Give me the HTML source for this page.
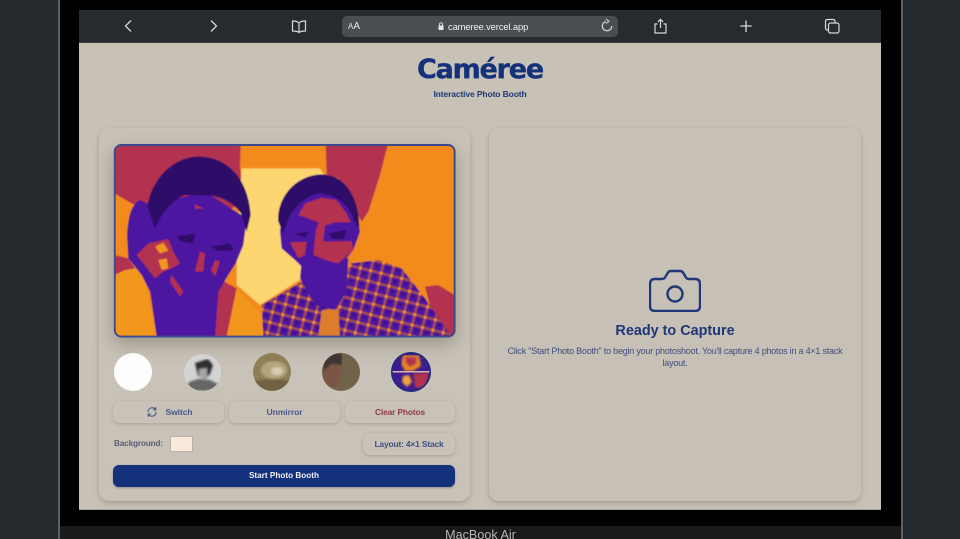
<!DOCTYPE html>
<html lang="en">
<head>
<meta charset="utf-8">
<title>Cameree</title>
<style>
html,body{margin:0;padding:0;width:960px;height:539px;overflow:hidden;background:#24292e;font-family:"Liberation Sans",sans-serif}
#wrap{position:absolute;left:0;top:0;width:960px;height:539px;overflow:hidden;background:#24292e;filter:blur(.35px)}
.abs,.abs *,.btn{box-sizing:border-box}
.abs{position:absolute}
.btn{position:absolute;background:#c9c2b8;border-radius:7px;box-shadow:0 1px 3px rgba(110,100,85,.35);font-size:8.6px;font-weight:bold;text-align:center;line-height:22px;color:#4a5a8c;letter-spacing:-.1px;white-space:nowrap}
.thumb{position:absolute;border-radius:50%;overflow:hidden}
svg{display:block}
.t{position:absolute;white-space:nowrap}
</style>
</head>
<body>
<div id="wrap">
<!-- laptop shell -->
<div class="abs" style="left:58px;top:-10px;width:845px;height:549px;background:#000;border-left:2px solid #5c5f65;border-right:2px solid #5c5f65"></div>
<div class="abs" style="left:60px;top:526px;width:841px;height:13px;background:#1a1a1b"></div>
<div class="t" style="left:400px;width:161px;top:528px;text-align:center;font-size:12.6px;line-height:14px;color:#b6b6b6">MacBook Air</div>

<!-- screen -->
<div class="abs" style="left:79px;top:43px;width:802px;height:467px;background:#c8c1b5;border-bottom:1px solid #aaa59b"></div>

<!-- safari bar -->
<div class="abs" style="left:79px;top:10px;width:802px;height:33px;background:#272b30;border-bottom:1px solid #3a3d40"></div>
<div class="abs" style="left:342px;top:16px;width:276px;height:21px;background:#4a4d52;border-radius:5px"></div>
<div class="t" style="left:348px;top:21px;font-size:10px;line-height:12px;color:#e4e4e4"><span style="font-size:8px">A</span>A</div>
<div class="t" style="left:448px;top:20px;font-size:9.4px;line-height:13px;color:#f0f0f0;letter-spacing:-.12px">cameree.vercel.app</div>
<svg class="abs" style="left:79px;top:10px" width="802" height="33" viewBox="79 10 802 33" fill="none" stroke="#d8d8d8" stroke-width="1.2">
  <path d="M131 20.500 L125.500 26 L131 31.500" stroke-width="1.300"/>
  <path d="M211 20.500 L216.500 26 L211 31.500" stroke-width="1.300"/>
  <path d="M299 23 C297 21 295 21 292.500 21 V31 C295 31 297.500 31 299 32.500 C300.500 31 303 31 305.500 31 V21 C303 21 301 21 299 23 Z M299 23 V32.500"/>
  <path d="M438.500 25.500 h5 v4.500 h-5 z" fill="#e6e6e6" stroke="none"/>
  <path d="M439.500 25.500 v-1.200 a1.500 1.500 0 0 1 3 0 v1.200" stroke="#e6e6e6" stroke-width=".9"/>
  <path d="M606 21.500 A4.700 4.700 0 1 0 611.700 26" />
  <path d="M606 19 L609 21.300 L606 23.500" stroke-width="1"/>
  <path d="M657.500 24 H655 V33 H666 V24 H663.500 M660.500 28 V19.500 M657.800 22 L660.500 19.300 L663.200 22"/>
  <path d="M746 20.500 V32 M740.300 26 H751.700" stroke-width="1.300"/>
  <rect x="828.500" y="23" width="10.500" height="10" rx="2"/>
  <path d="M828.500 30 H827.500 Q825.500 30 825.500 28 V21.500 Q825.500 19.500 827.500 19.500 H833 Q835 19.500 835 21.500 V23"/>
</svg>

<!-- header -->
<div class="t" style="left:79px;width:802px;top:53px;text-align:center;font-size:27px;line-height:34px;font-weight:bold;color:#14327c;font-family:'DejaVu Sans',sans-serif;letter-spacing:-1.2px;-webkit-text-stroke:.35px #14327c">Caméree</div>
<div class="t" style="left:79px;width:802px;top:88px;text-align:center;font-size:8.5px;line-height:12px;font-weight:bold;color:#1f3778;letter-spacing:-.12px">Interactive Photo Booth</div>

<!-- panels -->
<div class="abs" style="left:99px;top:128px;width:371px;height:373px;background:#c9c2b8;border-radius:10px;box-shadow:0 2px 5px rgba(120,112,95,.45)"></div>
<div class="abs" style="left:489px;top:128px;width:372px;height:373px;background:#c7c0b7;border-radius:10px;box-shadow:0 2px 5px rgba(120,112,95,.45)"></div>

<!-- camera feed -->
<div class="abs" style="left:113px;top:144px;width:343px;height:194px;border-radius:8px;box-shadow:0 7px 18px rgba(90,85,75,.4)"></div>
<svg class="abs" style="left:105px;top:135px" width="360" height="210" viewBox="0 0 1080 630">
  <defs><clipPath id="fr"><rect x="29" y="30" width="1020" height="575" rx="20"/></clipPath>
  <filter id="b" x="0" y="0" width="100%" height="100%"><feGaussianBlur stdDeviation="1.600"/></filter>
  <filter id="tb" x="0" y="0" width="100%" height="100%"><feGaussianBlur stdDeviation="1"/></filter>
  <pattern id="pl" width="32" height="32" patternUnits="userSpaceOnUse" patternTransform="rotate(14)">
    <rect width="32" height="32" fill="#4d12a0"/>
    <rect x="4" width="8" height="32" fill="#a04a55"/>
    <rect y="6" width="32" height="8" fill="#a04a55"/>
    <rect x="4" y="6" width="8" height="8" fill="#f59a28"/>
    <rect x="20" y="20" width="6" height="6" fill="#2e0a68"/>
  </pattern></defs>
  <g clip-path="url(#fr)" filter="url(#b)">
    <rect x="29" y="30" width="1020" height="575" fill="#f28a1c"/>
    <path d="M29 30 H407 L405 100 L420 200 L300 260 L130 230 L70 200 L29 175 Z" fill="#b23250"/>
    <path d="M662 30 H848 L825 120 L790 230 L770 260 L700 130 L665 118 Z" fill="#b23250"/>
    <path d="M410 100 H645 L665 130 L620 300 L600 425 L465 510 L395 450 L395 340 L400 250 Z" fill="#fdd671"/>
    <path d="M960 455 L1000 450 L1049 480 V605 H1000 Z" fill="#b23250"/>
    <path d="M29 360 L70 370 L90 400 L29 420 Z" fill="#b23250"/>
    <path d="M29 420 L60 405 L130 395 L120 430 L155 605 H29 Z" fill="#f2961e"/>
    <path d="M340 430 L395 460 L365 605 H325 Z" fill="#b23250"/>
    <path d="M395 460 L470 540 L480 605 H365 Z" fill="#f2961e"/>
    <!-- left person -->
    <path d="M66 300 Q70 210 105 195 L135 210 L300 170 L425 250 L415 330 L392 385 L370 420 L340 470 L330 605 L155 605 L135 470 L110 420 L70 370 Z" fill="#4d12a0"/>
    <path d="M128 215 C135 150 190 70 275 65 C365 62 430 130 437 240 L425 290 L408 235 C385 205 360 190 320 182 L240 180 C210 190 170 230 150 280 Z" fill="#2e0a68"/>
    <path d="M95 360 L130 325 L190 312 L205 350 L225 385 L200 400 L175 410 L150 430 L115 385 Z" fill="#b23250"/>
    <path d="M150 335 l25 -12 l15 24 l-25 8 z M160 375 l25 -5 l5 30 l-20 5z" fill="#f2961e"/>
    <path d="M215 305 L270 295 L265 325 L230 320 Z M320 335 L375 325 L385 345 L340 348 Z" fill="#2e0a68"/>
    <path d="M285 350 L300 355 L295 410 L270 410 Z M330 375 L345 380 L330 425 L318 405 Z M200 420 L235 470 L225 485 L195 440 Z M270 208 L295 220 L270 222 Z" fill="#b23250"/>
    <!-- right person -->
    <path d="M470 510 L590 440 L640 500 L720 440 L735 385 L820 375 L890 400 L960 490 L1040 605 H475 Z" fill="url(#pl)"/>
    <path d="M640 605 L650 525 L700 520 L705 605 Z" fill="#dd7c2c"/>
    <path d="M585 430 L590 380 L730 370 L725 470 L690 525 L630 510 Z" fill="#4d12a0"/>
    <path d="M525 290 Q530 200 650 150 Q750 200 765 290 L745 345 L705 395 L620 425 L570 375 L530 340 Z" fill="#4d12a0"/>
    <path d="M580 240 L600 205 L650 188 L695 195 L725 235 L738 262 L690 262 L660 272 L655 320 L740 318 L745 345 L700 385 L670 378 L625 360 L632 290 L640 262 Z" fill="#b23250"/>
    <path d="M555 322 L605 320 L600 360 L580 370 Z" fill="#b23250"/>
    <path d="M520 260 C515 190 570 120 650 118 C720 118 765 190 763 285 L745 250 C735 215 700 180 645 175 C600 180 550 225 535 295 Z" fill="#2e0a68"/>
    <path d="M570 296 L610 290 L600 308 Z M670 295 L725 285 L715 312 L685 312 Z" fill="#2e0a68"/>
  </g>
  <rect x="29" y="30" width="1020" height="575" rx="20" fill="none" stroke="#3d4a8c" stroke-width="6"/>
</svg>

<!-- filter thumbs -->
<div class="thumb" style="left:114px;top:353px;width:38px;height:38px;background:#fdfdfd"></div>
<svg class="thumb" style="left:184px;top:354px" width="37" height="37" viewBox="0 0 37 37">
  <rect width="37" height="37" fill="#d4d4d4"/>
  <g filter="url(#tb)">
  <path d="M1 37 L5 28 L14 25 L26 26 L36 31 V37 Z" fill="#666"/>
  <path d="M11 9 L24 5 L29 11 L26 20 L21 25 L14 22 Z" fill="#2f2f2f"/>
  <path d="M15 15 L23 14 L23 22 L19 26 L15 22 Z" fill="#a5a5a5"/>
  </g>
</svg>
<svg class="thumb" style="left:253px;top:353px" width="38" height="38" viewBox="0 0 38 38">
  <rect width="38" height="38" fill="#8f7f55"/>
  <g filter="url(#tb)">
  <ellipse cx="21" cy="17" rx="13" ry="9" fill="#b3a67e"/>
  <ellipse cx="24" cy="18" rx="6" ry="4" fill="#d6ccb0"/>
  <path d="M0 29 Q20 23 38 29 V38 H0 Z" fill="#6f6240"/>
  </g>
</svg>
<svg class="thumb" style="left:322px;top:353px" width="38" height="38" viewBox="0 0 38 38">
  <rect width="38" height="38" fill="#71634a"/>
  <g filter="url(#tb)">
  <ellipse cx="10" cy="22" rx="10" ry="13" fill="#7a5647"/>
  <path d="M0 0 H20 L20 12 L9 11 L2 18 Z" fill="#3f3431"/>
  </g>
</svg>
<svg class="thumb" style="left:391px;top:352px" width="40" height="40" viewBox="0 0 40 40">
  <rect width="40" height="40" fill="#3d1b91"/>
  <g filter="url(#tb)">
  <path d="M12 3 H28 L30 14 L22 19 H14 L10 12 Z" fill="#e8851d"/>
  <path d="M14 5 H26 L25 12 L19 15 L15 11 Z" fill="#b23250"/>
  <path d="M22 21 H38 L34 36 H24 Z" fill="#b23250"/>
  <path d="M12 24 L18 23 L21 30 L16 35 L11 30 Z" fill="#f2a23a"/>
  </g>
  <rect x="0" y="19" width="40" height="1.500" fill="#d8b9b0"/>
  <circle cx="20" cy="20" r="19.200" fill="none" stroke="#1e2f78" stroke-width="1.600"/>
</svg>

<!-- buttons -->
<div class="btn" style="left:113px;top:401px;width:111px;padding-left:21px">Switch</div>
<svg class="abs" style="left:146px;top:406px" width="12" height="12" viewBox="0 0 12 12" fill="none" stroke="#4a5a8c" stroke-width="1.100">
  <path d="M2 6 A4 4 0 0 1 9.300 3.500 M10 6 A4 4 0 0 1 2.700 8.500"/>
  <path d="M9.800 1.300 V3.900 H7.200 M2.200 10.700 V8.100 H4.800"/>
</svg>
<div class="btn" style="left:229px;top:401px;width:111px">Unmirror</div>
<div class="btn" style="left:345px;top:401px;width:110px;color:#8f3b4a;font-size:8.3px">Clear Photos</div>
<div class="t" style="left:114px;top:438px;font-size:8.2px;line-height:12px;font-weight:bold;color:#5b6072;letter-spacing:-.14px">Background:</div>
<div class="abs" style="left:170px;top:436px;width:23px;height:16px;background:#fbeadb;border:1px solid #b9b3a7;border-radius:1px"></div>
<div class="btn" style="left:363px;top:433px;width:92px;color:#3e5086;letter-spacing:-.2px;font-size:8.5px">Layout: 4×1 Stack</div>
<div class="abs" style="left:113px;top:465px;width:342px;height:22px;background:#14327c;border-radius:6px;box-shadow:0 1px 2px rgba(70,70,90,.4);color:#f0f0f4;font-size:8.2px;font-weight:bold;line-height:22px;text-align:center">Start Photo Booth</div>

<!-- right empty state -->
<svg class="abs" style="left:649px;top:269px" width="52" height="43" viewBox="0 0 52 43" fill="none" stroke="#1f3778" stroke-width="2.400" stroke-linejoin="round">
  <path d="M6 10 H13 Q15 10 16 8.500 L19 3.500 Q20 2 22 2 H31 Q33 2 34 3.500 L37 8.500 Q38 10 40 10 H46 Q51 10 51 15 V37 Q51 42 46 42 H6 Q1 42 1 37 V15 Q1 10 6 10 Z"/>
  <circle cx="26" cy="25" r="7.500"/>
</svg>
<div class="t" style="left:489px;width:372px;top:322px;text-align:center;font-size:14.4px;line-height:18px;font-weight:bold;color:#1f3778">Ready to Capture</div>
<div class="t" style="left:489px;width:372px;top:345px;text-align:center;font-size:9px;line-height:12px;color:#3f4d7c;letter-spacing:-.22px">Click "Start Photo Booth" to begin your photoshoot. You'll capture 4 photos in a 4×1 stack<br>layout.</div>
</div>
</body>
</html>
